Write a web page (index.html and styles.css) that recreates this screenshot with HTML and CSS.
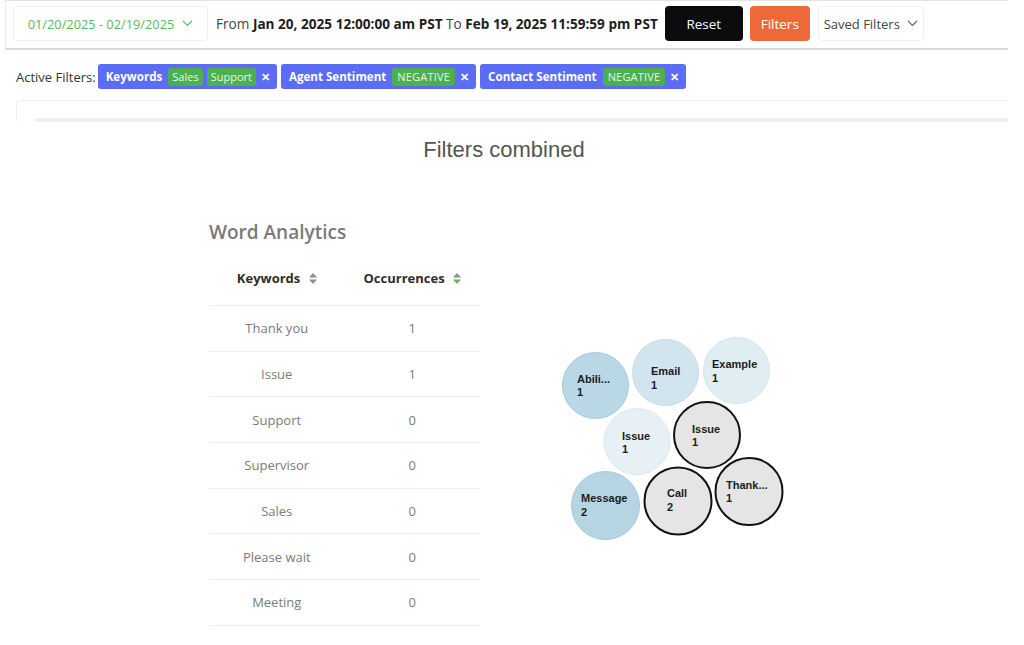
FILE: index.html
```html
<!DOCTYPE html>
<html>
<head>
<meta charset="utf-8">
<link rel="stylesheet" href="styles.css">
</head>
<body>
<div class="topbar">
  <div class="datepicker">01/20/2025 - 02/19/2025
    <svg class="chev" width="11" height="7" viewBox="0 0 11 7"><path d="M1 1l4.5 4.5L10 1" fill="none" stroke="#5cb860" stroke-width="1.2"/></svg>
  </div>
  <div class="range">From <b>Jan 20, 2025 12:00:00 am PST</b> To <b>Feb 19, 2025 11:59:59 pm PST</b></div>
  <button class="btn btn-reset">Reset</button>
  <button class="btn btn-filters">Filters</button>
  <button class="btn btn-saved">Saved Filters
    <svg class="chev" width="11" height="7" viewBox="0 0 11 7"><path d="M1 1l4.5 4.5L10 1" fill="none" stroke="#666" stroke-width="1.2"/></svg>
  </button>
</div>

<div class="active-row">
  <span class="active-label">Active Filters:</span>
  <span class="chip">Keywords <span class="tags"><span class="tag">Sales</span><span class="tag">Support</span></span><span class="x">✕</span></span>
  <span class="chip">Agent Sentiment <span class="tags"><span class="tag upper">NEGATIVE</span></span><span class="x">✕</span></span>
  <span class="chip">Contact Sentiment <span class="tags"><span class="tag upper">NEGATIVE</span></span><span class="x">✕</span></span>
</div>

<div class="card"><div class="card-bar"></div></div>

<h1 class="title">Filters combined</h1>

<div class="analytics">
  <div class="wa">
    <h2 class="wa-title">Word Analytics</h2>
    <table class="wa-table">
      <thead>
        <tr>
          <th>Keywords <svg class="sort" width="8" height="11" viewBox="0 0 8 11"><path d="M0 4.5L4 0l4 4.5z" fill="#8a8f98"/><path d="M0 6.5L4 11l4-4.5z" fill="#8a8f98"/></svg></th>
          <th>Occurrences <svg class="sort" width="8" height="11" viewBox="0 0 8 11"><path d="M0 4.5L4 0l4 4.5z" fill="#8a8f98"/><path d="M0 6.5L4 11l4-4.5z" fill="#5cb860"/></svg></th>
        </tr>
      </thead>
      <tbody>
        <tr><td>Thank you</td><td>1</td></tr>
        <tr><td>Issue</td><td>1</td></tr>
        <tr><td>Support</td><td>0</td></tr>
        <tr><td>Supervisor</td><td>0</td></tr>
        <tr><td>Sales</td><td>0</td></tr>
        <tr><td>Please wait</td><td>0</td></tr>
        <tr><td>Meeting</td><td>0</td></tr>
      </tbody>
    </table>
  </div>
  <svg class="bubbles" width="260" height="340" viewBox="0 0 260 340">
    <g transform="translate(-550,-220)">
      <circle cx="595.5" cy="385.5" r="33" fill="#b9d7e4" stroke="#a6cadb" stroke-width="1"/>
      <circle cx="665.5" cy="372.5" r="33" fill="#d2e5ee" stroke="#c3dce7" stroke-width="1"/>
      <circle cx="736.5" cy="370.5" r="33" fill="#e0edf3" stroke="#d2e5ee" stroke-width="1"/>
      <circle cx="637" cy="441.5" r="33" fill="#e7f1f5" stroke="#d9e9f0" stroke-width="1"/>
      <circle cx="707" cy="435" r="33" fill="#e5e5e5" stroke="#111" stroke-width="2"/>
      <circle cx="605.5" cy="505.5" r="34" fill="#b6d5e3" stroke="#a4c9da" stroke-width="1"/>
      <circle cx="678" cy="501" r="33.5" fill="#e5e5e5" stroke="#111" stroke-width="2"/>
      <circle cx="749" cy="491.5" r="33.5" fill="#e5e5e5" stroke="#111" stroke-width="2"/>
      <g class="blabel">
        <text x="577" y="383">Abili...</text><text x="577" y="396">1</text>
        <text x="651" y="375">Email</text><text x="651" y="389">1</text>
        <text x="712" y="368">Example</text><text x="712" y="382">1</text>
        <text x="622" y="440">Issue</text><text x="622" y="453">1</text>
        <text x="692" y="433">Issue</text><text x="692" y="446">1</text>
        <text x="581" y="502">Message</text><text x="581" y="516">2</text>
        <text x="667" y="497">Call</text><text x="667" y="511">2</text>
        <text x="726" y="489">Thank...</text><text x="726" y="502">1</text>
      </g>
    </g>
  </svg>
</div>
</body>
</html>
```
FILE: styles.css
```css
body {
  margin: 0;
  background: #fff;
  font-family: "Open Sans", "Lato", sans-serif;
  color: #333;
}

.topbar {
  margin-left: 5px;
  width: 1003px;
  height: 50px;
  box-sizing: border-box;
  border-top: 1px solid #e3e3e3;
  border-left: 1px solid #e8e8e8;
  border-bottom: 2px solid #dadada;
  padding: 5px 0 0 7px;
  display: flex;
  align-items: flex-start;
}

.datepicker {
  width: 195px;
  height: 35px;
  box-sizing: border-box;
  border: 1px solid #efefef;
  border-radius: 4px;
  color: #5cb860;
  font-size: 12.8px;
  display: flex;
  align-items: center;
  justify-content: center;
  gap: 8px;
}

.chev { display: block; }

.range {
  margin-left: 8px;
  height: 35px;
  line-height: 35px;
  font-size: 13.6px;
  color: #444;
  white-space: nowrap;
}
.range b { color: #1e1e1e; font-weight: 700; }

.btn {
  height: 35px;
  border: none;
  border-radius: 4px;
  font-family: inherit;
  font-size: 13.5px;
  padding: 0;
  display: flex;
  align-items: center;
  justify-content: center;
}
.btn-reset { margin-left: 7px; width: 78px; background: #0c0c0e; color: #fff; }
.btn-filters { margin-left: 7px; width: 60px; background: #ee693a; color: #fff; }
.btn-saved {
  margin-left: 8px;
  width: 106px;
  background: #fff;
  color: #444;
  border: 1px solid #f0f0f0;
  gap: 7px;
  font-size: 13px;
}

.active-row {
  margin-top: 14px;
  padding-left: 16px;
  height: 25px;
  display: flex;
  align-items: center;
  gap: 4px;
}
.active-label { font-size: 13px; color: #333; margin-right: -2px; }
.chip {
  height: 25px;
  box-sizing: border-box;
  background: #5b6cf5;
  border-radius: 3px;
  color: #fff;
  font-size: 11.6px;
  font-weight: 700;
  display: flex;
  align-items: center;
  padding: 0 7px 0 8px;
  white-space: pre;
}
.tags { display: flex; gap: 4px; margin-left: 3px; }
.tag {
  background: #4caf50;
  color: #e9f6ea;
  font-size: 11px;
  font-weight: 400;
  height: 18px;
  line-height: 18px;
  padding: 0 4px;
  border-radius: 3px;
}
.tag.upper { letter-spacing: 0.2px; padding: 0 5px; }
.x { margin-left: 5px; font-size: 11px; font-weight: 700; }

.card {
  margin: 11px 0 0 16px;
  width: 992px;
  height: 22px;
  box-sizing: border-box;
  border-top: 1px solid #f0f0f0;
  border-left: 1px solid #f0f0f0;
  border-radius: 4px 0 0 0;
  padding-top: 17px;
}
.card-bar {
  margin-left: 18px;
  height: 4px;
  background: #efefef;
}

.title {
  margin: 17px 0 0 16px;
  width: 976px;
  text-align: center;
  font-family: "Liberation Sans", Arial, sans-serif;
  font-weight: 400;
  font-size: 22px;
  line-height: 22px;
  color: #555;
}

.analytics {
  margin-top: 59px;
  display: flex;
  align-items: flex-start;
}
.wa { margin-left: 209px; width: 271px; }
.wa-title {
  margin: 0;
  font-size: 19px;
  line-height: 24px;
  font-weight: 600;
  color: #7a7a7a;
}
.wa-table {
  margin-top: 6px;
  width: 271px;
  border-collapse: collapse;
  table-layout: fixed;
}
.wa-table th {
  height: 55px;
  padding: 0;
  font-size: 13px;
  font-weight: 700;
  color: #2e2e2e;
  border-bottom: 1px solid #eeeeee;
  white-space: nowrap;
}
.sort { display: inline-block; vertical-align: -1px; margin-left: 5px; }
.wa-table td {
  height: 44.7px;
  padding: 0;
  text-align: center;
  font-size: 13px;
  color: #7b7b7b;
  border-bottom: 1px solid #eeeeee;
}

.bubbles { margin-left: 70px; display: block; }
.blabel text {
  font-family: "Liberation Sans", Arial, sans-serif;
  font-size: 11px;
  font-weight: 700;
  fill: #1c1c1c;
}
```
